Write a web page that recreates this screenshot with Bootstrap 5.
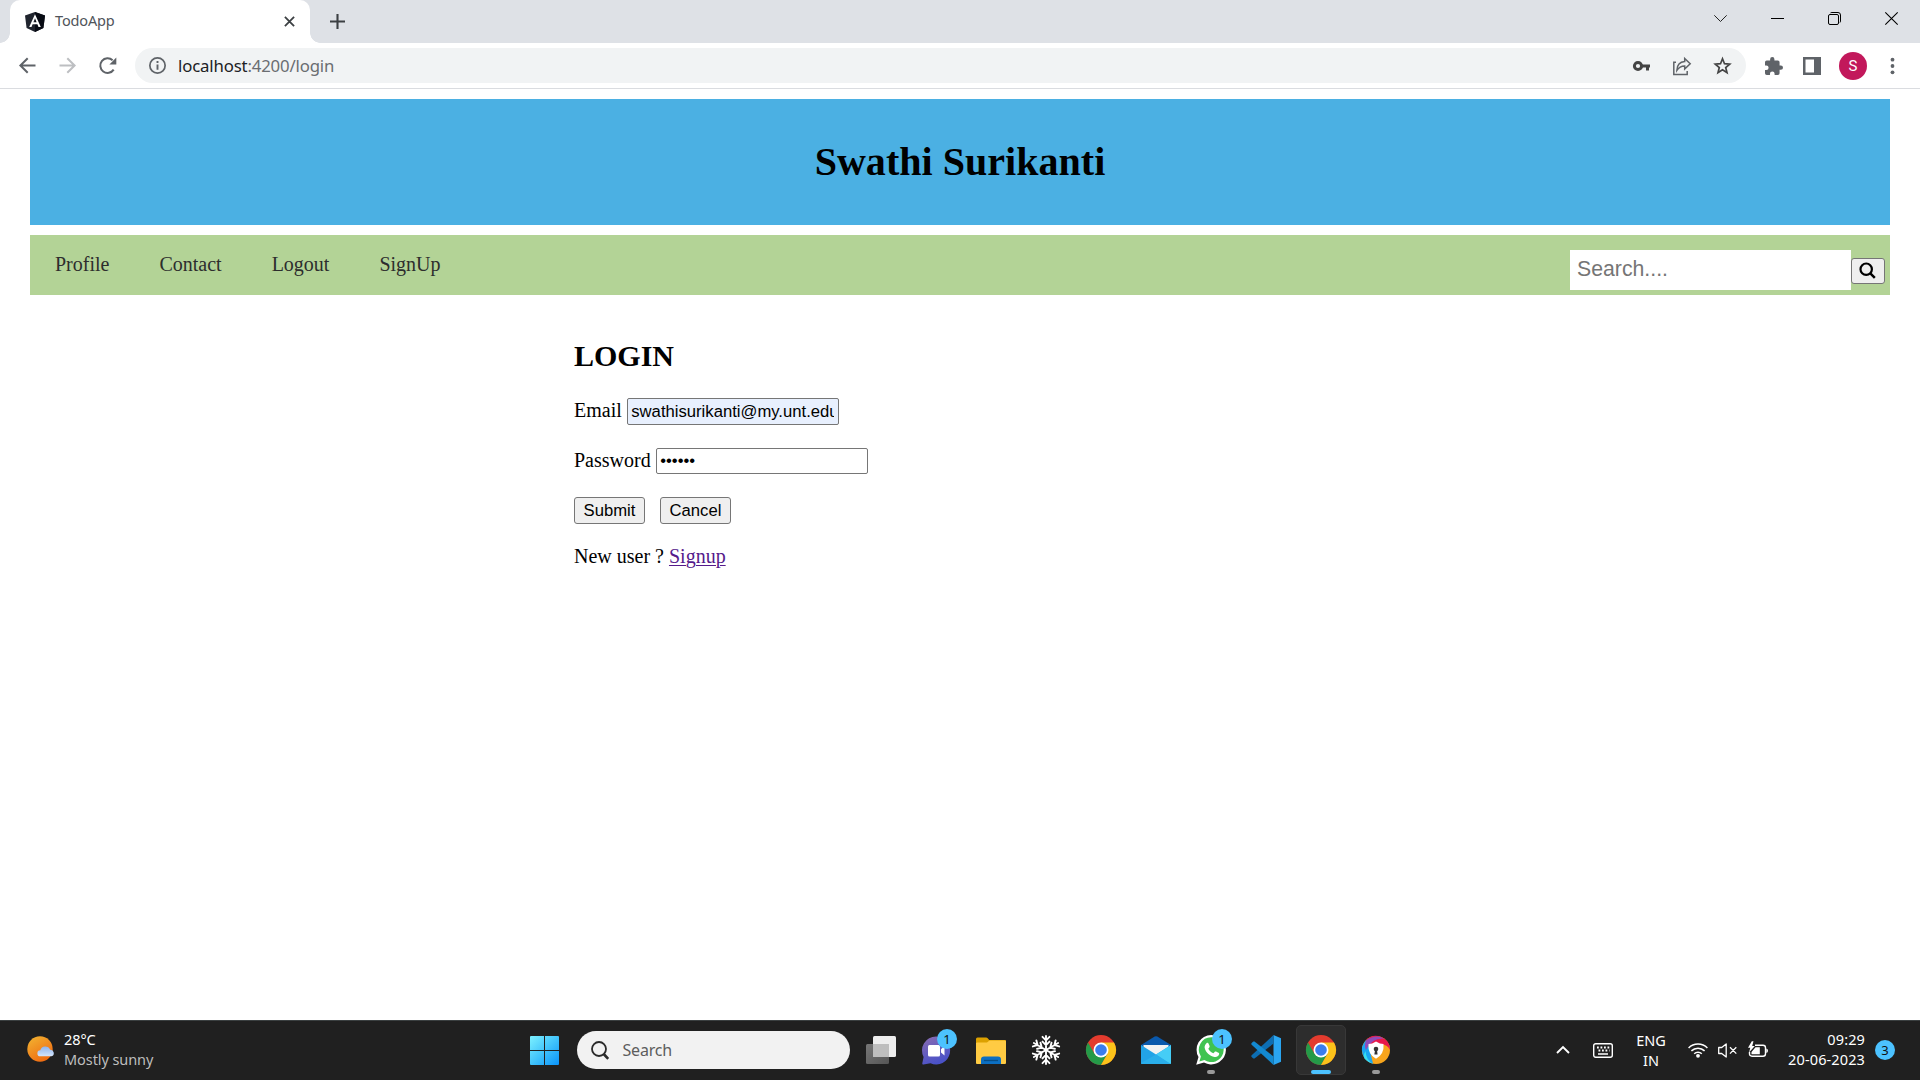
<!DOCTYPE html>
<html lang="en">
<head>
<meta charset="utf-8">
<title>TodoApp</title>
<link href="https://cdn.jsdelivr.net/npm/bootstrap@5.3.0/dist/css/bootstrap.min.css" rel="stylesheet">
<style>
html,body{height:100%}
body{width:1920px;height:1080px;overflow:hidden;background:#fff;color:#000;font-family:"Noto Sans",sans-serif;line-height:1}
svg{display:block;flex:none;overflow:visible}
.tabstrip{height:43px;background:#dee1e6;padding-left:10px}
.tab-active{width:300px;height:43px;background:#fff;border-radius:10px 10px 0 0;padding:0 15px 0 15px;position:relative}
.tab-active::before,.tab-active::after{content:"";position:absolute;bottom:0;width:10px;height:10px}
.tab-active::before{left:-10px;background:radial-gradient(circle at 0 0,transparent 9.5px,#fff 10px)}
.tab-active::after{right:-10px;background:radial-gradient(circle at 100% 0,transparent 9.5px,#fff 10px)}
.tab-title{font-size:14.5px;letter-spacing:-.15px;color:#50545a;line-height:20px;margin:-3px auto 0 10px}
.new-tab{margin-left:20px}
.win-controls{gap:44px;padding:0 22.5px 6px 0}
.toolbar{height:46px;border-bottom:1px solid #dadce0;padding:0 20px 0 19px}
.omnibox{height:35px;border-radius:18px;background:#f1f3f4;margin:0 19px 0 18px;padding:0 15px 0 14px}
.url{font-size:16.75px;letter-spacing:-.15px;line-height:24px;color:#6a6d71;margin:0 auto 0 12px}
.url b{font-weight:400;color:#202124}
.omni-icons{gap:23px}
.tool-icons{gap:20px}
.avatar{width:28px;height:28px;background:#c2185b;color:#fff;font:15px/28px Roboto,sans-serif;text-align:center;margin:0 -2px}
.page{height:931px;padding:10px 30px 0;font-family:"Liberation Serif",serif;font-size:20px;line-height:24px}
.banner{height:126px;background:#4bb0e3;margin-bottom:10px}
.banner h1{font-size:40px;font-weight:700;line-height:44px;letter-spacing:.04px;margin:0}
.menu{height:60px;background:#b3d396;padding-right:5px}
.menu a{color:#2d2d2d;text-decoration:none;padding:17px 25px 0}
.find{width:281px;height:40px;border:0;padding:0 7px 2px;font:21.25px "Liberation Sans",sans-serif;margin-top:15px;border-radius:0;outline:0}
.find::placeholder{color:#757575;opacity:1}
.native-btn{height:27px;border:1px solid #767676;border-radius:3px;background:#efefef;color:#000;font:16.667px/23px "Liberation Sans",sans-serif;padding:0 0 1px;width:71px}
.find-btn{width:34px;height:26px;margin-top:23px;padding:0 1px 1px 0}
.login{padding:44px 0 0 544px}
.login h2{font-size:30px;font-weight:700;line-height:34px;margin:0 0 25px}
.field{height:26px;gap:5px;margin-bottom:24px}
.field input{width:212px;height:27px;border:1px solid #767676;border-radius:2px;padding:1px 4px 0 3.5px;font:16.667px "Liberation Sans",sans-serif;color:#000}
.field input.autofilled{background:#e8f0fe}
.field input[type=password]{height:26px;padding:0 4px 1px 3.5px}
.actions{gap:15px;margin:-1px 0 20px}
.login a{color:#551a8b;text-decoration-thickness:1px;text-underline-offset:2px}
.taskbar{height:60px;background:#202020;border-top:1px solid #3a3f40;color:#fff;font-size:14.5px;line-height:20px;padding:0 25px 1px 0}
.weather{width:503px;margin-left:27px;gap:9px;letter-spacing:-.08px}
.weather-text,.clock{margin-top:-3px}
.weather small{font-size:14.5px;color:#bdbdbd;display:block}
.search-pill{width:273px;height:38px;border-radius:19px;background:#f2f2f2;margin:0 3px 0 18px;padding-left:14px;gap:13.5px;font-size:16px;letter-spacing:-.18px;color:#5d5d5d}
.app{width:55px;height:50px;position:relative}
.app.open::before{content:"";position:absolute;inset:0 2.5px;background:#2d2d2d;border:1px solid #383838;border-radius:5px}
.app svg{position:relative}
.app.run::after{content:"";position:absolute;bottom:1px;left:23.5px;width:8px;height:4px;border-radius:2px;background:#999}
.app.open::after{left:17.5px;width:20px;background:#4cc2ff}
.count{width:20px;height:20px;border-radius:50%;background:#4cc2ff;color:#111;text-align:center;line-height:20px;font-size:13px}
.app .count{position:absolute;left:29px;top:4px}
.clock{letter-spacing:.12px;text-align:right}
</style>
<script src="https://cdn.jsdelivr.net/npm/bootstrap@5.3.0/dist/js/bootstrap.bundle.min.js"></script>
</head>
<body class="d-flex flex-column">
<header>
  <div class="tabstrip d-flex align-items-center">
    <div class="tab-active d-flex align-items-center">
      <svg width="20" height="20" viewBox="0 0 20 20"><path d="M10 0 20 3.4 18.4 16 10 20 1.6 16 0 3.4Z" fill="#20242e"/><path d="M10 0 20 3.4 18.4 16 10 20Z" fill="#080b14"/><path fill-rule="evenodd" d="M10 2.3 4.2 15h2.3l1.1-2.8h4.8l1.1 2.8h2.3ZM8.4 10.2 10 6.3l1.6 3.9Z" fill="#fff"/></svg>
      <span class="tab-title">TodoApp</span>
      <svg width="11" height="11" viewBox="0 0 11 11"><path d="m.9.9 9.2 9.2m0-9.2L.9 10.1" stroke="#3c4043" stroke-width="1.8"/></svg>
    </div>
    <svg class="new-tab" width="15" height="15" viewBox="0 0 15 15"><path d="M7.5 0v15M0 7.5h15" stroke="#3c4043" stroke-width="2.1"/></svg>
    <div class="win-controls d-flex align-items-center ms-auto">
      <svg width="13" height="13" viewBox="0 0 13 13"><path d="m.3 3.3 6.2 6.2 6.2-6.2" fill="none" stroke="#222"/></svg>
      <svg width="13" height="13" viewBox="0 0 13 13"><path d="M0 6.5h13" stroke="#000"/></svg>
      <svg width="13" height="13" viewBox="0 0 13 13"><rect x=".5" y="2.5" width="10" height="10" rx="1.5" fill="none" stroke="#000"/><path d="M2.5.8Q3 .5 4 .5h6q2.500 0 2.500 2.500v6q0 1-.5 1.500" fill="none" stroke="#000"/></svg>
      <svg width="13" height="13" viewBox="0 0 13 13"><path d="m.3.3 12.400 12.400m0-12.400L.3 12.700" stroke="#000" stroke-width="1.100"/></svg>
    </div>
  </div>
  <div class="toolbar d-flex align-items-center">
    <svg width="17" height="17" viewBox="0 0 17 17"><path d="M16.500 8.500H2M8.700 1.200 1.400 8.500l7.300 7.300" fill="none" stroke="#5f6368" stroke-width="2"/></svg>
    <svg style="margin-left:23px" width="17" height="17" viewBox="0 0 17 17"><path d="M.5 8.500H15M8.300 1.200l7.300 7.300-7.300 7.300" fill="none" stroke="#bdbfc2" stroke-width="2"/></svg>
    <svg style="margin-left:23px" width="18" height="17" viewBox="0 0 18 17"><path d="M14.700 12.600A7.300 7.300 0 1 1 13.600 3.300" fill="none" stroke="#5f6368" stroke-width="2"/><path d="M17.300.5v6.900h-6.900Z" fill="#5f6368"/></svg>
    <div class="omnibox d-flex align-items-center flex-grow-1">
      <svg width="17" height="17" viewBox="0 0 16 16"><circle cx="8" cy="8" r="7.200" fill="none" stroke="#5f6368" stroke-width="1.600"/><path d="M8 7v5M8 3.800v1.800" stroke="#5f6368" stroke-width="1.800"/></svg>
      <span class="url"><b>localhost</b>:4200/login</span>
      <div class="omni-icons d-flex align-items-center">
        <svg width="17" height="18" viewBox="0 0 17 18"><circle cx="5" cy="9" r="3.600" fill="none" stroke="#444" stroke-width="3"/><path d="M9 9h8M14.500 9v4.500" stroke="#444" stroke-width="3"/></svg>
        <svg width="18" height="18" viewBox="0 0 18 18"><path d="M3 5.200H.8v12.300h13.400v-3.500" fill="none" stroke="#5f6368" stroke-width="1.500"/><path d="M3.900 13.300C4.100 8 6.800 5 11.700 4.600V1.500l5.500 5.300-5.500 5.300V8.900C8.300 9 5.900 10.200 3.900 13.300Z" fill="none" stroke="#5f6368" stroke-width="1.500"/></svg>
        <svg width="17" height="17" viewBox="0 0 17 17"><path d="m8.500 1.800 2 4.900 5.200.4-4 3.400 1.300 5.100-4.500-2.800L4 15.600l1.300-5.100-4-3.400 5.200-.4Z" fill="none" stroke="#444" stroke-width="1.700"/></svg>
      </div>
    </div>
    <div class="tool-icons d-flex align-items-center">
      <svg width="18" height="18" viewBox="2.5 1 20 21"><path d="M20.500 11H19V7a2 2 0 0 0-2-2h-4V3.500a2.500 2.500 0 0 0-5 0V5H4a2 2 0 0 0-2 2v3.800h1.500a2.700 2.700 0 0 1 0 5.400H2V20a2 2 0 0 0 2 2h3.800v-1.500a2.700 2.700 0 0 1 5.400 0V22H17a2 2 0 0 0 2-2v-4h1.500a2.500 2.500 0 0 0 0-5Z" fill="#5f6368"/></svg>
      <svg width="18" height="18" viewBox="0 0 18 18"><path fill-rule="evenodd" d="M0 0h18v18H0Zm2.500 2.500v13H11v-13Z" fill="#5f6368"/></svg>
      <div class="avatar rounded-circle">S</div>
      <svg width="15" height="18" viewBox="0 0 15 18"><g fill="#5f6368"><circle cx="7.500" cy="2.700" r="1.900"/><circle cx="7.500" cy="9" r="1.900"/><circle cx="7.500" cy="15.300" r="1.900"/></g></svg>
    </div>
  </div>
</header>

<main class="page">
  <div class="banner d-flex align-items-center justify-content-center"><h1>Swathi Surikanti</h1></div>
  <nav class="menu d-flex align-items-start">
    <a href="#">Profile</a><a href="#">Contact</a><a href="#">Logout</a><a href="#">SignUp</a>
    <input class="find ms-auto" type="text" placeholder="Search....">
    <button class="native-btn find-btn d-flex align-items-center justify-content-center" type="button" aria-label="Search"><svg width="17" height="17" viewBox="0 0 17 17"><circle cx="7.200" cy="7.200" r="5.700" fill="none" stroke="#000" stroke-width="2.200"/><path d="m11.300 11.300 4.500 4.500" stroke="#000" stroke-width="2.500"/></svg></button>
  </nav>
  <form class="login">
    <h2>LOGIN</h2>
    <div class="field d-flex align-items-start"><label for="email">Email</label><input class="autofilled" id="email" type="text" value="swathisurikanti@my.unt.edu"></div>
    <div class="field d-flex align-items-start"><label for="pw">Password</label><input id="pw" type="password" value="123456"></div>
    <div class="actions d-flex"><button class="native-btn" type="button">Submit</button><button class="native-btn" type="button">Cancel</button></div>
    <div>New user ? <a href="#">Signup</a></div>
  </form>
</main>

<footer class="taskbar d-flex align-items-center">
  <div class="weather d-flex align-items-center">
    <svg width="28" height="28" viewBox="0 0 28 28"><defs><linearGradient id="sun" x1="0" y1="0" x2=".6" y2="1"><stop offset="0" stop-color="#f2b632"/><stop offset="1" stop-color="#ef6c12"/></linearGradient><linearGradient id="cl" x1="0" y1="0" x2="0" y2="1"><stop offset="0" stop-color="#8db4ee"/><stop offset="1" stop-color="#d5e5fc"/></linearGradient></defs><circle cx="13" cy="13" r="12.700" fill="url(#sun)"/><path d="M13.500 20.300a3 3 0 0 1-.2-6 5.200 5.200 0 0 1 9.800-.6 3.400 3.400 0 0 1 1.400 6.600Z" fill="url(#cl)"/></svg>
    <div class="weather-text">28°C<small>Mostly sunny</small></div>
  </div>
  <svg width="29" height="29" viewBox="0 0 29 29"><defs><linearGradient id="win" gradientUnits="userSpaceOnUse" x1="0" y1="0" x2="29" y2="29"><stop offset="0" stop-color="#7df1ff"/><stop offset=".5" stop-color="#42c4fb"/><stop offset="1" stop-color="#0a93fa"/></linearGradient></defs><path d="M1 0h13v14H0V1Q0 0 1 0ZM15 0h13q1 0 1 1v13H15ZM0 15h14v14H1q-1 0-1-1ZM15 15h14v13q0 1-1 1H15Z" fill="url(#win)"/></svg>
  <div class="search-pill d-flex align-items-center"><svg width="18" height="19" viewBox="0 0 18 19"><circle cx="8" cy="8" r="7" fill="none" stroke="#2a2a2a" stroke-width="1.800"/><path d="m12.700 13 4.500 4.800" stroke="#2a2a2a" stroke-width="2.600"/></svg>Search</div>

  <div class="app d-flex align-items-center justify-content-center"><svg width="30" height="28" viewBox="0 0 30 28"><defs><linearGradient id="tv" x1="0" y1="0" x2="1" y2="1"><stop offset="0" stop-color="#777"/><stop offset="1" stop-color="#555"/></linearGradient></defs><rect y="8" width="23" height="20" rx="1.500" fill="url(#tv)"/><rect x="7" width="23" height="21" rx="1.500" fill="#eee"/><path d="M7 8h16v13H8.500Q7 21 7 19.500Z" fill="#bebebe"/></svg></div>
  <div class="app d-flex align-items-center justify-content-center"><svg width="28" height="29" viewBox="0 0 28 29"><defs><linearGradient id="chat" x1="0" y1="0" x2=".4" y2="1"><stop offset="0" stop-color="#8a6cb0"/><stop offset="1" stop-color="#4a52c8"/></linearGradient></defs><path d="M14 .5a14 14 0 1 1-5.500 26.800L1.500 28.500Q0 28.800.3 27.300L1.600 21A14 14 0 0 1 14 .5Z" fill="url(#chat)"/><rect x="6" y="9" width="12" height="11.500" rx="1.500" fill="#fff"/><path d="M19 13.200 22.500 10v9.500L19 16.500Z" fill="#fff"/></svg><span class="count">1</span></div>
  <div class="app d-flex align-items-center justify-content-center"><svg width="30" height="27" viewBox="0 0 30 27"><path d="M0 2Q0 .5 1.500.5h8.700Q11 .5 11.700 1.200L13.200 3H29q1 0 1 1v5H0Z" fill="#dca100"/><path d="M1 5.500h10L13.500 3.500H29q1 0 1 1V26q0 1-1 1H1q-1 0-1-1V6Z" fill="#ffcb43"/><path d="M5 27v-4.500Q5 19.500 8 19.500h14q3 0 3 3V27Z" fill="#0c6fc2"/><path d="M8 23.500h14" stroke="#064d86" stroke-width="1.300"/></svg></div>
  <div class="app d-flex align-items-center justify-content-center"><svg width="30" height="30" viewBox="-15 -15 30 30"><defs><path id="arm" d="M0 0V-14M-3.500-13.200 0-9.700l3.500-3.500M-3.500-8.400 0-4.900l3.500-3.500"/></defs><g fill="none" stroke="#fff" stroke-width="1.900" stroke-linecap="round"><use href="#arm"/><use href="#arm" transform="rotate(60)"/><use href="#arm" transform="rotate(120)"/><use href="#arm" transform="rotate(180)"/><use href="#arm" transform="rotate(240)"/><use href="#arm" transform="rotate(300)"/></g></svg></div>
  <div class="app d-flex align-items-center justify-content-center"><svg width="30" height="30" viewBox="-15 -15 30 30"><g id="chrome"><circle r="15" fill="#e33b2e"/><path d="M-13-7.500A15 15 0 0 0 0 15L6.500 3.750H-6.500Z" fill="#249a48"/><path d="M13-7.500H0L6.500 3.750 0 15A15 15 0 0 0 13-7.500Z" fill="#fcc31a"/><circle r="7.500" fill="#fff"/><circle r="5.800" fill="#3b7ded"/></g></svg></div>
  <div class="app d-flex align-items-center justify-content-center"><svg width="30" height="28" viewBox="0 0 30 28"><path d="M0 9 13.700.6Q15 0 16.300.6L30 9v5H0Z" fill="#0a59ac"/><path d="M2.500 9h25v9L15 22 2.500 16Z" fill="#f2f2f2"/><path d="M0 9l15 9.500L30 9v18q0 1-1 1H1q-1 0-1-1Z" fill="#22a3e7"/><path d="m15 18.500 15-9.500v18q0 1-1 1Z" fill="#45cdf6"/><path d="m15 18.500 14.500 9.300-.5.200H1q-1 0-1-1Z" fill="#2aaeea"/></svg></div>
  <div class="app run d-flex align-items-center justify-content-center"><svg width="30" height="30" viewBox="0 0 30 30"><path d="M15.300 0A14.700 14.700 0 1 1 8 27.500L.2 29.800 2.500 22A14.700 14.700 0 0 1 15.300 0Z" fill="#fff"/><path d="M15.300 2.300A12.400 12.400 0 1 1 8.400 25l-5 1.500L4.900 21.500A12.400 12.400 0 0 1 15.300 2.300Z" fill="#3fc351"/><path d="M10.500 8.200c.7-.6 1.600-.5 2 .3l1.100 2.600c.2.600 0 1-.5 1.600l-.8 1c1.200 2.200 2.800 3.700 5.100 4.600l1.200-1.400c.4-.5.8-.6 1.400-.3l2.500 1.200c.7.400.8.800.6 1.500-.6 2.100-2.600 3-4.600 2.600-5.200-1.200-8.600-4.500-9.800-9-.4-1.700.5-3.500 1.800-4.700Z" fill="#fff"/></svg><span class="count">1</span></div>
  <div class="app d-flex align-items-center justify-content-center"><svg width="30" height="30" viewBox="0 0 30 30"><path d="M22.500 0 30 3.300v23.400L22.500 30Z" fill="#2aa5f1"/><path d="M22.500 0v8.600L3.500 23.400 2.300 23.600.4 21.800V20.400Z" fill="#0d6eb3"/><path d="M22.500 30v-8.600L3.500 6.600 2.300 6.400.4 8.200V9.600Z" fill="#1389d0"/></svg></div>
  <div class="app open run d-flex align-items-center justify-content-center"><svg width="30" height="30" viewBox="-15 -15 30 30"><use href="#chrome"/></svg></div>
  <div class="app run d-flex align-items-center justify-content-center"><svg width="28" height="28" viewBox="-14 -14 28 28"><circle r="14" fill="#f7a51c"/><path d="M-10-9.800A14 14 0 0 1 14 0Q12-5 5-6L-8-6Z" fill="#e8174b"/><path d="M-10-9.800A14 14 0 0 0-3 13.700L-5 5-8-6Z" fill="#19a5f2"/><path d="M-10-9.800Q0-16 8-11.500Q-5-12-10 0Q-12-4-10-9.800Z" fill="#8f4bb8"/><path d="M-3 13.700Q-10 10-10.500 1Q-14 7-10 9.800Q-7 13-3 13.700Z" fill="#37dff0"/><path d="M0-8.500Q4-6 7.500-6 8.500 4 0 8.800-8.500 4-7.500-6-4-6 0-8.500Z" fill="#fff"/><circle cy="-1" r="2.300" fill="#333"/><path d="M-1 0h2l.6 4.500h-3.200Z" fill="#333"/></svg></div>

  <svg style="margin-left:153px" width="14" height="8" viewBox="0 0 14 8"><path d="m1 7 6-6 6 6" fill="none" stroke="#fff" stroke-width="1.900"/></svg>
  <svg style="margin-left:23px" width="20" height="15" viewBox="0 0 20 15"><rect x=".7" y=".7" width="18.600" height="13.600" rx="2" fill="none" stroke="#fff" stroke-width="1.400"/><path d="M4 4.500h13M5.500 7.500h11" stroke="#fff" stroke-width="1.800" stroke-dasharray="1.800 1.700"/><path d="M5 11h10" stroke="#fff" stroke-width="1.500"/></svg>
  <div class="text-center" style="margin-left:23px;width:30px">ENG<br>IN</div>
  <svg style="margin-left:22px" width="20" height="16" viewBox="0 0 20 16"><g fill="none" stroke="#fff" stroke-width="1.500"><path d="M.6 6a13.300 13.300 0 0 1 18.800 0M3.400 8.900a9.300 9.300 0 0 1 13.200 0M6.200 11.700a5.400 5.400 0 0 1 7.600 0"/></g><circle cx="10" cy="13.800" r="1.900" fill="#fff"/></svg>
  <svg style="margin-left:10px" width="19" height="15" viewBox="0 0 19 15"><path d="M.7 4.500h3L8.200.9v13.200L3.700 10.500h-3ZM12 4.300l6.300 6.300m0-6.300L12 10.600" fill="none" stroke="#fff" stroke-width="1.300" stroke-linejoin="round"/></svg>
  <svg style="margin-left:11px" width="20" height="18" viewBox="0 0 20 18"><path d="M7 4.200h8q2.500 0 2.500 2.500v6q0 2.500-2.500 2.500H4q-2.500 0-2.500-2.500V11" fill="none" stroke="#fff" stroke-width="1.400"/><path d="M18.300 7.500q1.700.3 1.700 2.200t-1.700 2.200ZM7.500 6.200h4.300v7H3.500V11Z" fill="#fff"/><path d="M3.800.3 0 6.800h2.300L1 11.500 6.800 4.900H4.200L5.500.3Z" fill="#fff"/></svg>
  <div class="clock ms-auto">09:29<br>20-06-2023</div>
  <span class="count" style="margin-left:10px">3</span>
</footer>
</body>
</html>
